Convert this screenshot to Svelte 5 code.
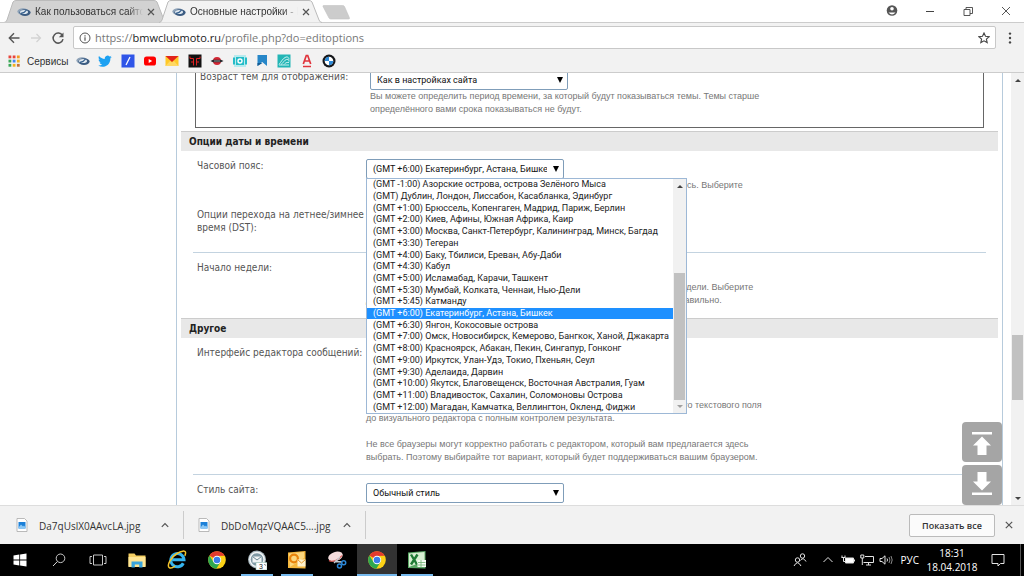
<script>
  const zones = [
    '(GMT -1:00) Азорские острова, острова Зелёного Мыса',
    '(GMT) Дублин, Лондон, Лиссабон, Касабланка, Эдинбург',
    '(GMT +1:00) Брюссель, Копенгаген, Мадрид, Париж, Берлин',
    '(GMT +2:00) Киев, Афины, Южная Африка, Каир',
    '(GMT +3:00) Москва, Санкт-Петербург, Калининград, Минск, Багдад',
    '(GMT +3:30) Тегеран',
    '(GMT +4:00) Баку, Тбилиси, Ереван, Абу-Даби',
    '(GMT +4:30) Кабул',
    '(GMT +5:00) Исламабад, Карачи, Ташкент',
    '(GMT +5:30) Мумбай, Колката, Ченнаи, Нью-Дели',
    '(GMT +5:45) Катманду',
    '(GMT +6:00) Екатеринбург, Астана, Бишкек',
    '(GMT +6:30) Янгон, Кокосовые острова',
    '(GMT +7:00) Омск, Новосибирск, Кемерово, Бангкок, Ханой, Джакарта',
    '(GMT +8:00) Красноярск, Абакан, Пекин, Сингапур, Гонконг',
    '(GMT +9:00) Иркутск, Улан-Удэ, Токио, Пхеньян, Сеул',
    '(GMT +9:30) Аделаида, Дарвин',
    '(GMT +10:00) Якутск, Благовещенск, Восточная Австралия, Гуам',
    '(GMT +11:00) Владивосток, Сахалин, Соломоновы Острова',
    '(GMT +12:00) Магадан, Камчатка, Веллингтон, Окленд, Фиджи'
  ];
  let zone = $state(zones[11]);
  const tabs = [
    { title: 'Как пользоваться сайтом', active: false },
    { title: 'Основные настройки - BMW', active: true }
  ];
  const bookmarks = ['site', 'twitter', 'slash', 'youtube', 'mail', 'bull', 'metro', 'cam', 'flag', 'wave', 'letter', 'bmw'];
  const files = ['Da7qUslX0AAvcLA.jpg', 'DbDoMqzVQAAC5....jpg'];
  const apps = [
    { id: 'explorer' }, { id: 'ie' }, { id: 'chrome' },
    { id: 'post', open: true }, { id: 'outlook', open: true }, { id: 'snip' },
    { id: 'chrome', open: true, front: true }, { id: 'excel', open: true }
  ];
</script>

{#snippet siteLogo()}
  <svg viewBox="0 0 14 14" class="i14" aria-hidden="true">
    <ellipse cx="6" cy="6.6" rx="5.6" ry="3.4" fill="#8fa3b8" />
    <ellipse cx="8" cy="7.6" rx="5.6" ry="3.4" fill="#3c5c82" />
    <ellipse cx="7" cy="6.9" rx="4" ry="2" fill="#dfe8f0" />
    <path d="M4 8.5 Q8 7.5 9.5 5" stroke="#355f8d" stroke-width="1.4" fill="none" />
  </svg>
{/snippet}

{#snippet bookmark(id)}
  {#if id === 'site'}
    {@render siteLogo()}
  {:else}
    <svg viewBox="0 0 14 14" class="i14" aria-hidden="true">
      {#if id === 'twitter'}
        <path fill="#1da1f2" d="M13.8 2.9c-.5.2-1 .4-1.6.4.6-.3 1-.9 1.2-1.5-.5.3-1.100.500-1.800.700A2.800 2.800 0 0 0 6.800 5C4.500 4.900 2.400 3.800 1 2.100c-.8 1.300-.4 2.900.9 3.800-.5 0-.9-.1-1.300-.3 0 1.300.9 2.500 2.300 2.800-.4.1-.8.1-1.300 0 .4 1.100 1.400 1.900 2.600 2A5.700 5.700 0 0 1 .2 11.500c4.900 3 12.300.5 12.200-7.200.5-.4 1-.9 1.400-1.400z" />
      {:else if id === 'slash'}
        <rect x="0.500" y="0.500" width="13" height="13" fill="#2f55e8" /><path d="M5 11 9 3" stroke="#fff" stroke-width="1.3" />
      {:else if id === 'youtube'}
        <rect x="1" y="2.500" width="12" height="9" rx="2.600" fill="#f00" /><path d="M5.700 5v4l3.500-2z" fill="#fff" />
      {:else if id === 'mail'}
        <path d="M.5 2h13v10H.5z" fill="#ffc928" /><path d="M.5 2h13L7 8z" fill="#e2231a" /><path d="M.5 12 5 7l2 1.500L9 7l4.500 5z" fill="#ffd863" />
      {:else if id === 'bull'}
        <rect x="0.500" y="0.500" width="13" height="13" fill="#111" /><path d="M2 2.500V4.500H5.500V11.500M12 2.500V4.500H8.500V11.500M3 8h2.500M8.500 8H11" stroke="#e02020" stroke-width="1" fill="none" />
      {:else if id === 'metro'}
        <circle cx="7" cy="7" r="4" fill="#d32734" /><path d="M.5 7 3 5.800h8L13.500 7 11 8.200H3z" fill="#27282c" /><path d="M4 7h6" stroke="#ddd" stroke-width=".6" />
      {:else if id === 'cam'}
        <path d="M1 1h12v12H1z" fill="#b8ebee" /><path d="M0 3.500h2v7H0zm12 0h2v7h-2zM3 3h8v8H3z" fill="#25bcc8" /><circle cx="7" cy="7" r="2.700" fill="#fff" /><circle cx="7" cy="7" r="1.300" fill="#25bcc8" />
      {:else if id === 'flag'}
        <path d="M2.500 1h9.500v11L7.200 8 2.500 12z" fill="#2787c8" /><path d="M2.500 9h5L2.500 12z" fill="#145b92" />
      {:else if id === 'wave'}
        <rect x="0.500" y="0.500" width="13" height="13" fill="#23b5b5" /><path d="M2 10.500C4 8 6 4 9 3c2-.500 3 1 3 2.500M4 10.500c2-1 3-4.500 5.500-5s2.500 1 2.500 2M7 10.500c1-1 2-2.500 5-2M2 11h10" stroke="#d9f5f5" fill="none" stroke-width=".9" />
      {:else if id === 'letter'}
        <path d="M3.300 10 6.300 1.500h1.400L10.700 10M4.500 7h5" stroke="#e0343c" stroke-width="1.700" fill="none" /><path d="M3 12.500h8" stroke="#e0343c" stroke-width="1.500" />
      {:else if id === 'bmw'}
        <circle cx="7" cy="7" r="6.500" fill="#16181c" /><circle cx="7" cy="7" r="4.300" fill="#fff" /><path d="M7 7V2.700A4.300 4.300 0 0 0 2.700 7zM7 7v4.300A4.300 4.300 0 0 0 11.300 7z" fill="#2c8ad8" />
      {/if}
    </svg>
  {/if}
{/snippet}

{#snippet appIcon(id)}
  <svg viewBox="0 0 20 20" class="i20" aria-hidden="true">
    {#if id === 'explorer'}
      <path d="M1.500 3.500h6l1.500 2h9.500v11h-17z" fill="#f5cf62" /><path d="M1.500 7h17v10h-17z" fill="#ffe695" /><path d="M4.500 17.500v-6h11v6h-3.300v-3H7.800v3z" fill="#3aa5dc" />
    {:else if id === 'ie'}
      <path d="M16.300 13.200a6.600 6.600 0 1 1 .7-3.400H5.500" fill="none" stroke="#35b4ee" stroke-width="3" /><path d="M2.500 17.800C-1 16 4 7 10 3.500 14 1 18.500 0 18.600 2.800c0 1-.3 2-.8 3M2.500 17.800c1.500.7 4-.6 5.500-1.800" fill="none" stroke="#f4c52c" stroke-width="1.500" />
    {:else if id === 'chrome'}
      <circle cx="10" cy="10" r="8.800" fill="#fcd116" /><path d="M10 10 2.400 5.600A8.800 8.800 0 0 1 17.700 5.800L10 6z" fill="#e33b2e" /><path d="M2.400 5.600A8.800 8.800 0 0 0 9.300 18.800L13.500 12 10 10 6.500 12z" fill="#2fa84f" /><circle cx="10" cy="10" r="4.200" fill="#fff" /><circle cx="10" cy="10" r="3.300" fill="#3b7de8" />
    {:else if id === 'post'}
      <circle cx="10" cy="9.500" r="9" fill="#a9b8bf" /><circle cx="10" cy="9.500" r="7.800" fill="#f4f7f8" /><circle cx="10" cy="9.500" r="6.300" fill="#7f99a5" /><path d="M5.500 6.500h9v6h-9z" fill="#f0f4f5" /><path d="m5.500 6.500 4.500 3.500 4.500-3.500" fill="none" stroke="#6a8793" /><path d="M9 12.500h11v7.500H9z" fill="#fff" stroke="#8ba" stroke-width=".5" /><text x="12" y="19" font-size="7" fill="#222">3</text><path d="m17.500 14 1 1.500" stroke="#222" stroke-width=".7" />
    {:else if id === 'outlook'}
      <path d="M1 2.500 18.500 1v17.500L1 18z" fill="#f5b73c" /><path d="M2 3.500 17 2v6L3 17z" fill="#fbd77e" /><circle cx="7" cy="8.500" r="3.900" fill="none" stroke="#e8830c" stroke-width="2.200" /><path d="M10.500 9.500h8v7h-8z" fill="#fff1cc" /><path d="m11 10 3.500 3 3.500-3" fill="none" stroke="#e79a2b" />
    {:else if id === 'snip'}
      <ellipse cx="8.500" cy="6.500" rx="7.500" ry="4.500" transform="rotate(-18 8.500 6.500)" fill="#f4dcdc" /><path d="M2 10.500c3 2 10-.5 13-5" fill="none" stroke="#d9534f" stroke-width="1.200" /><path d="M7 13 13 7M8 11.500l7 .5" stroke="#c5ccd3" stroke-width="1.300" /><circle cx="12.500" cy="16" r="2" fill="none" stroke="#2b86d6" stroke-width="1.500" /><circle cx="16.700" cy="12.800" r="2" fill="none" stroke="#2b86d6" stroke-width="1.500" />
    {:else if id === 'excel'}
      <path d="M1 2.500 18.500 1v17.500L1 18z" fill="#5aa765" /><path d="M2 3.500 17.500 2v9L2 17z" fill="#d8efd2" /><path d="m4 4.500 6 10M10.500 4.500l-6.500 10" stroke="#1f7a35" stroke-width="2.400" /><path d="M10.500 10h8.500v7h-8.500z" fill="#f4fbf2" /><path d="M11 12.500h7.500M11 15h7.500M14 10v7" stroke="#6cb06f" stroke-width=".8" />
    {/if}
  </svg>
{/snippet}

<div class="screen">
  <header class="strip">
    <div class="tabs">
      {#each tabs as tab}
        <div class="tab" class:active={tab.active}>
          <svg class="shape" viewBox="0 0 163 23" preserveAspectRatio="none" aria-hidden="true">
            <path d="M0 22.500 Q2 22.500 3 20 L9 2 Q10 .5 12 .5 H150 Q152 .5 153 2 L160 20 Q161 22.500 163 22.500" />
          </svg>
          {@render siteLogo()}
          <span class="title">{tab.title}</span>
          <button class="plain" aria-label="Закрыть вкладку"><svg viewBox="0 0 8 8" class="i8"><path d="m1 1 6 6M7 1 1 7" stroke="#555" stroke-width="1.200" /></svg></button>
        </div>
      {/each}
      <button class="plain newtab" aria-label="Новая вкладка"><svg viewBox="0 0 30 15" width="30" height="15"><path d="M3 .5h18.500q1.500 0 2 1L28.500 13q.3 1-1 1H10q-1.500 0-2-1L2 1.500Q1.500.5 3 .5z" fill="#ccc" stroke="#c2c2c2" stroke-width=".6" /></svg></button>
    </div>
    <div class="winctl">
      <button class="plain" aria-label="Профиль"><svg viewBox="0 0 12 12" class="i12"><circle cx="6" cy="5.500" r="5.300" fill="#555" /><circle cx="6" cy="3.700" r="1.800" fill="#fff" /><path d="M2.500 7.500h7Q6 11.500 2.500 7.500z" fill="#fff" /></svg></button>
      <button class="plain" aria-label="Свернуть"><svg viewBox="0 0 12 12" class="i12"><path d="M2 6.500h8" stroke="#444" /></svg></button>
      <button class="plain" aria-label="Развернуть"><svg viewBox="0 0 12 12" class="i12"><path d="M2 4.500h6v6H2zM4 4.500v-2h6.500v6H8" fill="none" stroke="#444" stroke-width=".9" /></svg></button>
      <button class="plain" aria-label="Закрыть"><svg viewBox="0 0 12 12" class="i12"><path d="m2 2 8 8M10 2l-8 8" stroke="#444" stroke-width=".9" /></svg></button>
    </div>
  </header>

  <div class="toolbar">
    <button class="plain" aria-label="Назад"><svg viewBox="0 0 14 14" class="i14"><path d="M12.500 7H2.500M7 2.300 2.300 7 7 11.700" fill="none" stroke="#555" stroke-width="1.400" /></svg></button>
    <button class="plain" aria-label="Вперёд"><svg viewBox="0 0 14 14" class="i14"><path d="M2 7h9.500M7.500 3l4 4-4 4" fill="none" stroke="#d3d3d3" stroke-width="1.300" /></svg></button>
    <button class="plain" aria-label="Обновить"><svg viewBox="0 0 14 14" class="i14"><path d="M11.400 4.500A5 5 0 1 0 12 8.200" fill="none" stroke="#555" stroke-width="1.500" /><path d="M12.500 1.500v4.700H7.800z" fill="#555" /></svg></button>
    <div class="address">
      <svg viewBox="0 0 12 12" class="i12"><circle cx="6" cy="6" r="5" fill="none" stroke="#555" /><path d="M6 5.200v3.500M6 3.200v1.200" stroke="#555" stroke-width="1.200" /></svg>
      <span class="url">https://<b>bmwclubmoto.ru</b>/profile.php?do=editoptions</span>
      <button class="plain" aria-label="Добавить в закладки"><svg viewBox="0 0 12 12" class="i12"><path d="m6 1 1.500 3.300 3.600.4-2.700 2.400.8 3.500L6 8.800l-3.200 1.800.8-3.500L.9 4.700l3.600-.4z" fill="none" stroke="#444" stroke-width="1.100" /></svg></button>
    </div>
    <button class="plain menu" aria-label="Меню"><svg viewBox="0 0 12 12" class="i12"><circle cx="6" cy="1.600" r="1.200" fill="#444" /><circle cx="6" cy="6" r="1.200" fill="#444" /><circle cx="6" cy="10.400" r="1.200" fill="#444" /></svg></button>
  </div>

  <nav class="bookmarks">
    <svg viewBox="0 0 12 12" class="i12" aria-hidden="true">
      {#each ['#e8453c', '#e8453c', '#f29c1f', '#3aa757', '#4285f4', '#f2b01f', '#3aa757', '#f2b01f', '#c0713c'] as c, i}
        <rect x={0.5 + (i % 3) * 4.2} y={0.5 + Math.floor(i / 3) * 4.2} width="2.800" height="2.800" fill={c} />
      {/each}
    </svg>
    <a class="services" href="#apps">Сервисы</a>
    <div class="marks">
      {#each bookmarks as b}<a href="#{b}" aria-label={b}>{@render bookmark(b)}</a>{/each}
    </div>
  </nav>

  <main class="view">
    <div class="page">
      <div class="panel">
        <div class="boxed">
          <div class="row">
            <label for="age">Возраст тем для отображения:</label>
            <div class="field">
              <select id="age"><option>Как в настройках сайта</option></select>
              <p class="hint">Вы можете определить период времени, за который будут показываться темы. Темы старше<br />определённого вами срока показываться не будут.</p>
            </div>
          </div>
        </div>
        <h2>Опции даты и времени</h2>
        <div class="row">
          <label for="tz">Часовой пояс:</label>
          <div class="field">
            <select id="tz" bind:value={zone}>{#each zones as z}<option>{z}</option>{/each}</select>
            <div class="popup">
              <ul role="listbox" aria-label="Часовой пояс">
                {#each zones as z}<li role="option" aria-selected={z === zone} class:on={z === zone}>{z}</li>{/each}
              </ul>
              <div class="scroll list">
                <svg viewBox="0 0 8 8" class="i8"><path d="M1 6h6L4 3z" fill="#444" /></svg>
                <span class="thumb"></span>
                <svg viewBox="0 0 8 8" class="i8"><path d="M1 3h6L4 6z" fill="#a0a0a0" /></svg>
              </div>
            </div>
            <p class="hint">Время в форуме показывается с учётом часового пояса, который указан здесь. Выберите<br />нужный вариант из списка.</p>
          </div>
        </div>
        <div class="row dst">
          <label for="dst">Опции перехода на летнее/зимнее время (DST):</label>
          <div class="field"><select id="dst"><option>Автоматически</option></select></div>
        </div>
        <div class="row week">
          <label for="week">Начало недели:</label>
          <div class="field">
            <select id="week"><option>Понедельник</option></select>
            <p class="hint">В разных странах мира принято брать первыми разные дни календарной недели. Выберите<br />день начала недели, чтобы календарь событий этого сайта показывался правильно.</p>
          </div>
        </div>
        <h2>Другое</h2>
        <div class="row editor">
          <label for="editor">Интерфейс редактора сообщений:</label>
          <div class="field">
            <select id="editor"><option>Визуальный редактор</option></select>
            <p class="hint">Вы можете выбрать тип редактора для сообщений на этом сайте, от простого текстового поля<br />до визуального редактора с полным контролем результата.<br /><br />Не все браузеры могут корректно работать с редактором, который вам предлагается здесь<br />выбрать. Поэтому выбирайте тот вариант, который будет поддерживаться вашим браузером.</p>
          </div>
        </div>
        <div class="row">
          <label for="style">Стиль сайта:</label>
          <div class="field"><select id="style"><option>Обычный стиль</option></select></div>
        </div>
      </div>
    </div>
    <div class="scroll main">
      <svg viewBox="0 0 8 8" class="i8"><path d="M1 6h6L4 3z" fill="#444" /></svg>
      <span class="thumb"></span>
      <svg viewBox="0 0 8 8" class="i8"><path d="M1 3h6L4 6z" fill="#444" /></svg>
    </div>
    <div class="jump">
      <button aria-label="Наверх"><svg viewBox="0 0 40 40"><path d="M10 10h20v2.500H10zM20 14.500l9 9h-4.500V33h-9v-9.500H11z" fill="#fff" /></svg></button>
      <button aria-label="Вниз"><svg viewBox="0 0 40 40"><path d="M10 27.500h20V30H10zM20 25.500l9-9h-4.500V7h-9v9.500H11z" fill="#fff" /></svg></button>
    </div>
  </main>

  <footer class="downloads">
    {#each files as f}
      <div class="file">
        <svg viewBox="0 0 12 14" width="12" height="14" aria-hidden="true"><path d="M1 .5h7.500L11 3v10.500H1z" fill="#fff" stroke="#aaa" stroke-width=".8" /><path d="M2.500 4h7v6.500h-7z" fill="#1c80d8" /><path d="m2.500 9.500 2.500-3 2 2 1-1 1.500 2v1h-7z" fill="#8cc8f5" /></svg>
        <span>{f}</span>
        <button class="plain" aria-label="Действия"><svg viewBox="0 0 8 8" class="i8"><path d="M.8 5.800 4 2.500l3.200 3.300" fill="none" stroke="#555" stroke-width="1.200" /></svg></button>
      </div>
    {/each}
    <button class="all">Показать все</button>
    <button class="plain" aria-label="Закрыть панель"><svg viewBox="0 0 8 8" class="i8"><path d="m.8.8 6.400 6.400M7.200.8.8 7.200" stroke="#555" stroke-width="1.200" /></svg></button>
  </footer>

  <div class="taskbar">
    <button class="sys" aria-label="Пуск"><svg viewBox="0 0 14 14" class="i14"><path d="M.5 2.500 6.300 1.600v5H.5zM7.100 1.500 13.500.5v6.100H7.100zM.5 7.400h5.800v5L.5 11.500zM7.100 7.400h6.400v6.100l-6.400-1z" fill="#fff" /></svg></button>
    <button class="sys" aria-label="Поиск"><svg viewBox="0 0 14 14" class="i14"><circle cx="8.500" cy="5.300" r="4.300" fill="none" stroke="#ddd" stroke-width=".9" /><path d="M5.400 8.500 1 13" stroke="#ddd" stroke-width="1" /></svg></button>
    <button class="sys" aria-label="Представление задач"><svg viewBox="0 0 18 14" width="18" height="14"><path d="M4.500 2h9v10h-9zM3 3.500H1v7h2M15 3.500h2v7h-2" fill="none" stroke="#ddd" stroke-width=".9" /></svg></button>
    {#each apps as a}
      <button class="app" class:open={a.open} class:front={a.front} aria-label={a.id}>{@render appIcon(a.id)}</button>
    {/each}
    <div class="tray">
      <svg viewBox="0 0 14 14" class="i14"><circle cx="9.500" cy="3" r="2.200" /><path d="M7.500 7.500Q10 3.500 13 8.500" /><circle cx="4.500" cy="7" r="2.200" /><path d="M1 13Q4.500 6.500 8 13" /></svg>
      <svg viewBox="0 0 12 12" class="i12 chev"><path d="M1.500 8 6 3.500 10.500 8" /></svg>
      <svg viewBox="0 0 14 12" width="14" height="12"><path d="M4.500 4h8v5h-8z" fill="#fff" /><path d="M13.500 5.500v2M1 1.500v2h3v-2M2.500 3.500v4H5M.5 3.500h4" /></svg>
      <svg viewBox="0 0 14 12" width="14" height="12"><path d="M5 2.500h8.500v6H3.500M8.500 8.500v2.500M6 11h5M.8 1h3v3h-3zM2.300 4v7" /></svg>
      <svg viewBox="0 0 14 12" width="14" height="12"><path d="M1 4.500h2L6 1.800v8.400L3 7.500H1zM8 4.500q1 1.500 0 3" /><path d="M10 3q1.800 3 0 6M12 2q2.400 4 0 8" stroke-opacity=".6" /></svg>
      <span class="lang">РУС</span>
      <span class="clock">18:31<br />18.04.2018</span>
      <svg viewBox="0 0 14 14" class="i14"><path d="M1 1.500h12v9H9.500L7 13v-2.500H1z" /></svg>
      <span class="edge"></span>
    </div>
  </div>
</div>

<style>
  :global(body) { margin: 0; background: #fff; }
  * { box-sizing: border-box; }
  svg { display: block; flex: none; }
  .i8 { width: 8px; height: 8px; }
  .i12 { width: 12px; height: 12px; }
  .i14 { width: 14px; height: 14px; }
  .i20 { width: 20px; height: 20px; }
  .plain { padding: 0; border: 0; background: none; display: flex; flex: none; }
  .screen { height: 100vh; display: flex; flex-direction: column; overflow: hidden; font: 10px/13px "Open Sans", "Noto Sans", sans-serif; color: #333; }

  .strip { flex: none; height: 23px; display: flex; justify-content: space-between; border-bottom: 1px solid #ccc; }
  .tabs { display: flex; align-items: flex-start; padding-left: 4px; }
  .tab { position: relative; display: flex; align-items: center; gap: 4px; width: 163px; height: 23px; padding: 0 12px 0 13px; margin-right: -8px; }
  .tab.active { z-index: 1; }
  .shape { position: absolute; inset: 0; width: 100%; height: 100%; z-index: -1; }
  .shape path { fill: #d2d2d2; stroke: #bbb; stroke-width: 1; }
  .tab.active .shape path { fill: #f2f2f2; }
  .title { flex: 1; overflow: hidden; white-space: nowrap; font-family: "Liberation Sans", sans-serif; mask-image: linear-gradient(90deg, #000 86%, transparent); }
  .newtab { margin: 5px 0 0 7px; }
  .winctl { display: flex; align-items: center; gap: 26px; padding-right: 12px; }

  .toolbar { flex: none; display: flex; align-items: center; gap: 8px; height: 27px; padding: 2px 8px 0 7px; background: #f2f2f2; }
  .address { flex: 1; display: flex; align-items: center; gap: 4px; height: 23px; padding: 0 5px; border: 1px solid #c8c8c8; border-radius: 2px; background: #fff; }
  .url { flex: 1; font-size: 11px; color: #777; }
  .url b { font-weight: 400; color: #222; }
  .menu { width: 12px; }
  .bookmarks { flex: none; display: flex; align-items: center; gap: 7px; height: 23px; padding-left: 8px; border-bottom: 1px solid #ccc; background: #f2f2f2; }
  .bookmarks a { color: #333; text-decoration: none; font-family: "Liberation Sans", sans-serif; }
  .services { width: 42px; }
  .marks { display: flex; justify-content: space-between; width: 260px; }

  .view { position: relative; flex: 1; min-height: 0; display: flex; overflow: hidden; background: #fff; }
  .page { flex: 1; padding: 0 8px 0 176px; overflow: hidden; font-family: "DejaVu Sans Condensed", "DejaVu Sans", sans-serif; }
  .panel { margin-top: -3px; padding: 0 4px 12px; border: solid #b7cbdc; border-width: 0 1px; }
  .boxed { margin: 0 14px; height: 58px; border: solid #666; border-width: 0 1px 1px; }
  .boxed .row { margin: 0; padding: 0 4px; border: 0; }
  .boxed label { width: 170px; }
  h2 { margin: 3px 0 0; height: 20px; padding: 0 8px; border-top: 1px solid #ccc; background: #e8e8e8; font-size: 10px; line-height: 19px; color: #222; }
  .row { display: flex; margin: 0 12px; padding: 8px 0 0 4px; }
  label { flex: none; width: 169px; font-size: 10px; line-height: 13px; color: #555; }
  .field { position: relative; flex: 1; }
  select { display: block; width: 198px; height: 20px; padding: 0 16px 0 6px; border: 1px solid #7f9db9; border-radius: 2px; appearance: none; color: #111; font: 9px/18px Roboto, "Open Sans", sans-serif; background: url("data:image/svg+xml,%3Csvg xmlns='http://www.w3.org/2000/svg' viewBox='0 0 6 6'%3E%3Cpath d='M0 0h6L3 6z'/%3E%3C/svg%3E") no-repeat right 4px center / 6px 6px #fff; }
  .hint { margin: 0; font: 9px/13px "Liberation Sans", sans-serif; color: #777; white-space: nowrap; }
  .dst { padding-top: 3px; height: 47px; }
  .week, .editor + .row { border-top: 1px solid #c3d3e0; }
  .week { padding-bottom: 8px; }
  .editor { padding-bottom: 10px; }
  .editor .hint { margin-top: 33px; }
  .popup { position: absolute; z-index: 2; top: 19px; left: 0; display: flex; width: 321px; height: 236px; border: 1px solid #9db8d6; background: #fff; }
  .popup ul { flex: 1; min-width: 0; display: flex; flex-direction: column; margin: 0; padding: 0; list-style: none; }
  .popup li { flex: 1; display: flex; align-items: center; min-height: 0; padding-left: 6px; font: 9px/11px Roboto, "Open Sans", sans-serif; color: #222; white-space: nowrap; }
  .popup li.on { background: #1e90ff; color: #fff; }
  .scroll { flex: none; display: flex; flex-direction: column; align-items: center; justify-content: space-between; width: 13px; padding: 3px 0; background: #f1f1f1; }
  .scroll .thumb { width: 11px; background: #c1c1c1; }
  .list .thumb { height: 127px; margin: auto 0 2px; }
  .main .thumb { height: 65px; margin: auto 0 94px; }
  .jump { position: absolute; right: 22px; bottom: 0; display: flex; flex-direction: column; gap: 3px; }
  .jump button { width: 40px; height: 40px; padding: 0; border: 0; border-radius: 4px; background: #a5a5a5; }

  .downloads { flex: none; display: flex; align-items: center; height: 39px; padding: 0 11px 0 2px; border-top: 1px solid #ddd; background: #f2f2f2; }
  .file { flex: none; display: flex; align-items: center; gap: 11px; width: 182px; height: 28px; padding: 0 14px; border-right: 1px solid #ccc; }
  .file span { flex: 1; padding-top: 3px; }
  .all { width: 86px; height: 23px; margin: 0 10px 0 auto; padding: 0; border: 1px solid #bbb; border-radius: 2px; background: #fbfbfb; color: #333; font: 600 9px "Open Sans", sans-serif; }

  .taskbar { flex: none; display: flex; height: 32px; background: #000; color: #fff; }
  .sys, .app { display: flex; align-items: center; justify-content: center; width: 39px; padding: 0; border: 0; background: none; }
  .app { width: 40px; border: solid transparent; border-width: 2px 0; }
  .app.open { border-bottom-color: #76b9ed; background-clip: padding-box; margin: 0 4px; width: 32px; }
  .app.front { margin: 0; width: 40px; background: #333; }
  .tray { display: flex; align-items: center; gap: 5px; margin-left: auto; }
  .tray svg { fill: none; stroke: #e4e4e4; stroke-width: 1; }
  .chev { margin: 0 2px 0 10px; }
  .lang { margin-left: 3px; }
  .clock { width: 54px; margin: 0 7px 0 1px; text-align: center; line-height: 14px; }
  .edge { width: 1px; height: 32px; margin: 0 3px 0 10px; background: #555; }
</style>
